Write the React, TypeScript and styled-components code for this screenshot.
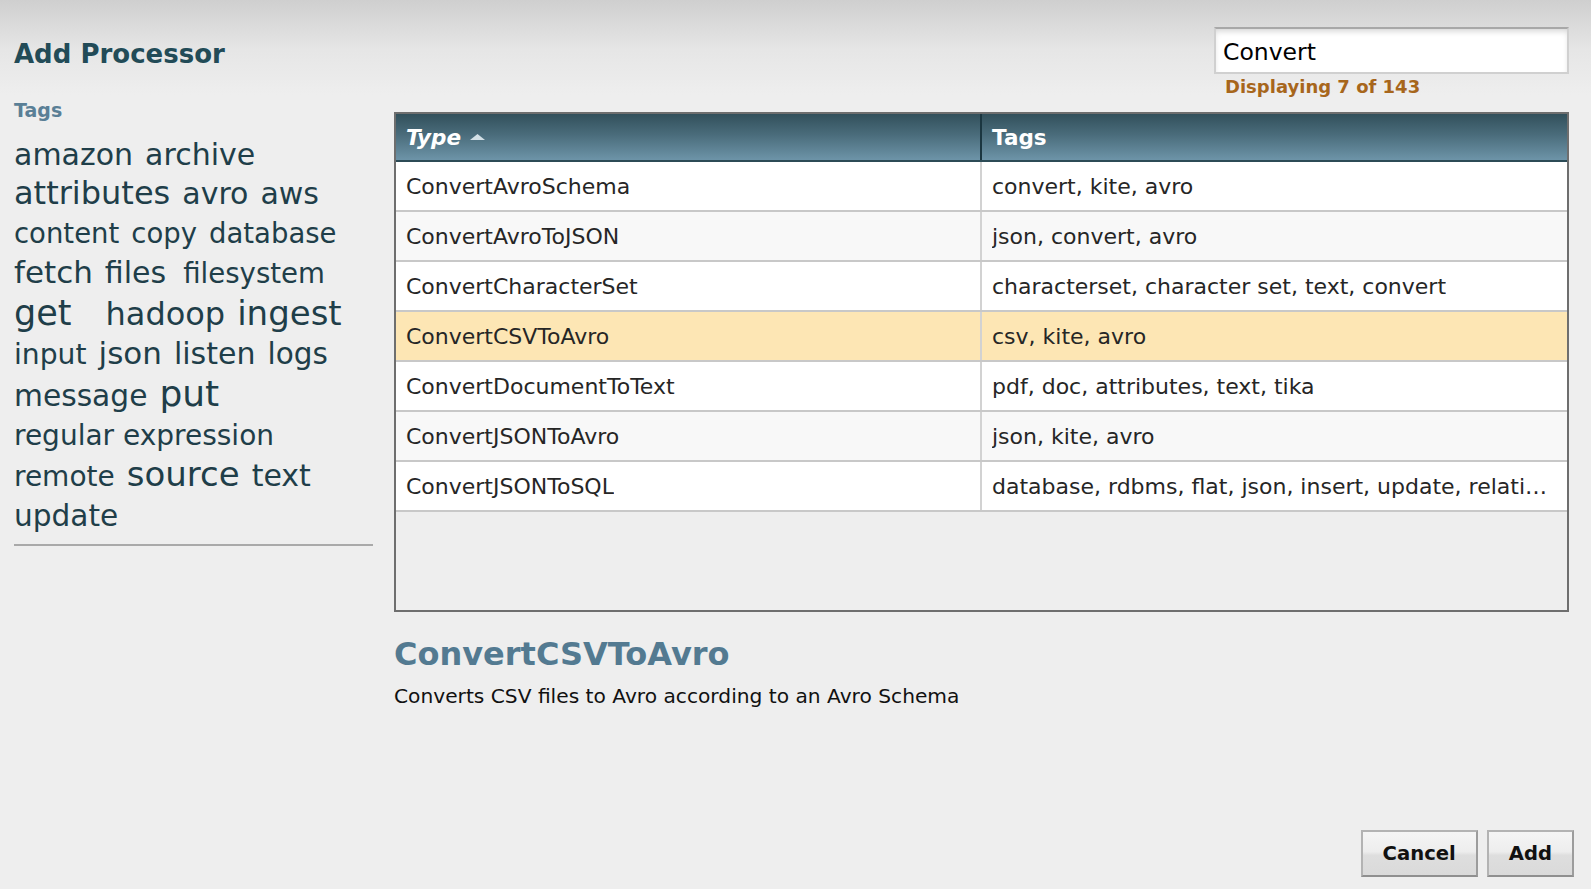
import React from "react";
import styled, { createGlobalStyle } from "styled-components";

const GlobalStyle = createGlobalStyle`
  html, body {
    margin: 0;
    padding: 0;
  }
  body {
    background: linear-gradient(to bottom, #cfcfcf 0px, #e6e6e6 50px, #eeeeee 95px, #eeeeee 100%);
    background-color: #eeeeee;
    font-family: "DejaVu Sans", Verdana, sans-serif;
    color: #262626;
  }
`;

const Page = styled.div`
  width: 1591px;
  height: 889px;
  box-sizing: border-box;
  display: flex;
  flex-direction: column;
  padding: 27px 22px 12px 14px;
`;

const Content = styled.div`
  display: flex;
  align-items: flex-start;
`;

const Sidebar = styled.aside`
  width: 359px;
  flex: none;
  padding-top: 12px;
`;

const Title = styled.h1`
  margin: 0;
  font-size: 26px;
  font-weight: bold;
  color: #224b57;
`;

const TagsLabel = styled.div`
  margin-top: 30px;
  font-size: 19px;
  font-weight: bold;
  color: #5a7f96;
`;

const TagCloud = styled.div`
  margin-top: 14px;
  display: flex;
  flex-wrap: wrap;
  align-items: baseline;
  column-gap: 12px;
`;

const Tag = styled.span<{ $size: number; $extra?: number }>`
  font-size: ${(p) => p.$size}px;
  line-height: 39.4px;
  color: #1f3e49;
  white-space: nowrap;
  margin-right: ${(p) => p.$extra || 0}px;
`;

const Divider = styled.hr`
  margin: 8px 0 0 0;
  border: none;
  height: 2px;
  background: #a9a9a9;
`;

const Main = styled.main`
  flex: 1;
  margin-left: 21px;
  display: flex;
  flex-direction: column;
`;

const SearchBlock = styled.div`
  align-self: flex-end;
  width: 355px;
`;

const SearchInput = styled.input`
  box-sizing: border-box;
  width: 100%;
  height: 47px;
  margin: 0;
  padding: 3px 7px 0;
  border: 2px solid #d0d0d0;
  border-top-color: #a8a8a8;
  background: #ffffff;
  box-shadow: inset 0 4px 6px -2px rgba(0, 0, 0, 0.18);
  font-family: "DejaVu Sans", Verdana, sans-serif;
  font-size: 23.5px;
  color: #000000;
  outline: none;
`;

const MatchCount = styled.div`
  margin-top: 1px;
  padding-left: 11px;
  font-size: 18px;
  font-weight: bold;
  line-height: 24px;
  color: #a7661c;
`;

const Table = styled.div`
  margin-top: 13px;
  height: 500px;
  box-sizing: border-box;
  border: 2px solid #6e6e6e;
  display: flex;
  flex-direction: column;
`;

const HeaderRow = styled.div`
  display: grid;
  grid-template-columns: 586px 1fr;
  height: 48px;
  box-sizing: border-box;
  border-bottom: 2px solid #2c4b56;
  background: linear-gradient(to bottom, #32505b 0%, #4a6c7b 45%, #6d94a8 100%);
`;

const HeaderCell = styled.div<{ $last?: boolean }>`
  display: flex;
  align-items: center;
  gap: 9px;
  padding-left: 10px;
  border-right: ${(p) => (p.$last ? "none" : "2px solid #1b3640")};
  font-size: 21.5px;
  font-weight: bold;
  color: #ffffff;
`;

const HeaderLabel = styled.span<{ $sorted?: boolean }>`
  font-style: ${(p) => (p.$sorted ? "italic" : "normal")};
`;

const Row = styled.div<{ $alt?: boolean; $selected?: boolean }>`
  display: grid;
  grid-template-columns: 586px 1fr;
  height: 50px;
  box-sizing: border-box;
  border-bottom: 2px solid #c8c8c8;
  background: ${(p) => (p.$selected ? "#fde6b4" : p.$alt ? "#f8f8f8" : "#ffffff")};
`;

const Cell = styled.div<{ $last?: boolean }>`
  display: flex;
  align-items: center;
  min-width: 0;
  padding: 0 10px;
  border-right: ${(p) => (p.$last ? "none" : "2px solid #d2d2d2")};
  font-size: 22px;
  color: #262626;
`;

const CellText = styled.span`
  white-space: nowrap;
  overflow: hidden;
  text-overflow: ellipsis;
`;

const DetailTitle = styled.h2`
  margin: 23px 0 0;
  font-size: 32px;
  font-weight: bold;
  color: #537a91;
`;

const DetailText = styled.p`
  margin: 11px 0 0;
  font-size: 20.2px;
  color: #111111;
`;

const Footer = styled.div`
  margin-top: auto;
  margin-right: -5px;
  display: flex;
  justify-content: flex-end;
  gap: 9px;
`;

const Button = styled.button`
  height: 47px;
  padding: 0 20px;
  border: 2px solid #b3b3b3;
  border-right-color: #9c9c9c;
  border-bottom-color: #8f8f8f;
  background: linear-gradient(to bottom, #f5f5f5 0%, #ededed 46%, #dedede 54%, #dadada 100%);
  font-family: "DejaVu Sans", Verdana, sans-serif;
  font-size: 19.6px;
  font-weight: bold;
  color: #111111;
  cursor: pointer;
`;

const SortArrow = () => (
  <svg width="15" height="6" viewBox="0 0 15 6">
    <polygon points="7.5,0 15,6 0,6" fill="#d3e0e6" />
  </svg>
);

const tags: { name: string; size: number; extra?: number }[] = [
  { name: "amazon", size: 30 },
  { name: "archive", size: 30 },
  { name: "attributes", size: 32 },
  { name: "avro", size: 30 },
  { name: "aws", size: 30 },
  { name: "content", size: 27.5 },
  { name: "copy", size: 27.5 },
  { name: "database", size: 27.5 },
  { name: "fetch", size: 31 },
  { name: "files", size: 30, extra: 5 },
  { name: "filesystem", size: 27.6 },
  { name: "get", size: 35, extra: 22 },
  { name: "hadoop", size: 32 },
  { name: "ingest", size: 34 },
  { name: "input", size: 28.2 },
  { name: "json", size: 31 },
  { name: "listen", size: 30 },
  { name: "logs", size: 29.5 },
  { name: "message", size: 29.7 },
  { name: "put", size: 36 },
  { name: "regular expression", size: 28 },
  { name: "remote", size: 28 },
  { name: "source", size: 34 },
  { name: "text", size: 30 },
  { name: "update", size: 29.6 },
];

const processors = [
  { type: "ConvertAvroSchema", tags: "convert, kite, avro" },
  { type: "ConvertAvroToJSON", tags: "json, convert, avro" },
  { type: "ConvertCharacterSet", tags: "characterset, character set, text, convert" },
  { type: "ConvertCSVToAvro", tags: "csv, kite, avro" },
  { type: "ConvertDocumentToText", tags: "pdf, doc, attributes, text, tika" },
  { type: "ConvertJSONToAvro", tags: "json, kite, avro" },
  {
    type: "ConvertJSONToSQL",
    tags: "database, rdbms, flat, json, insert, update, relational, sql",
  },
];

const App = () => {
  const selected = "ConvertCSVToAvro";

  return (
    <>
      <GlobalStyle />
      <Page>
        <Content>
          <Sidebar>
            <Title>Add Processor</Title>
            <TagsLabel>Tags</TagsLabel>
            <TagCloud>
              {tags.map((tag) => (
                <Tag key={tag.name} $size={tag.size} $extra={tag.extra}>
                  {tag.name}
                </Tag>
              ))}
            </TagCloud>
            <Divider />
          </Sidebar>

          <Main>
            <SearchBlock>
              <SearchInput value="Convert" readOnly />
              <MatchCount>Displaying 7 of 143</MatchCount>
            </SearchBlock>

            <Table>
              <HeaderRow>
                <HeaderCell>
                  <HeaderLabel $sorted>Type</HeaderLabel>
                  <SortArrow />
                </HeaderCell>
                <HeaderCell $last>
                  <HeaderLabel>Tags</HeaderLabel>
                </HeaderCell>
              </HeaderRow>
              {processors.map((p, i) => (
                <Row key={p.type} $alt={i % 2 === 1} $selected={p.type === selected}>
                  <Cell>
                    <CellText>{p.type}</CellText>
                  </Cell>
                  <Cell $last>
                    <CellText>{p.tags}</CellText>
                  </Cell>
                </Row>
              ))}
            </Table>

            <DetailTitle>ConvertCSVToAvro</DetailTitle>
            <DetailText>Converts CSV files to Avro according to an Avro Schema</DetailText>
          </Main>
        </Content>

        <Footer>
          <Button>Cancel</Button>
          <Button>Add</Button>
        </Footer>
      </Page>
    </>
  );
};

export default App;
